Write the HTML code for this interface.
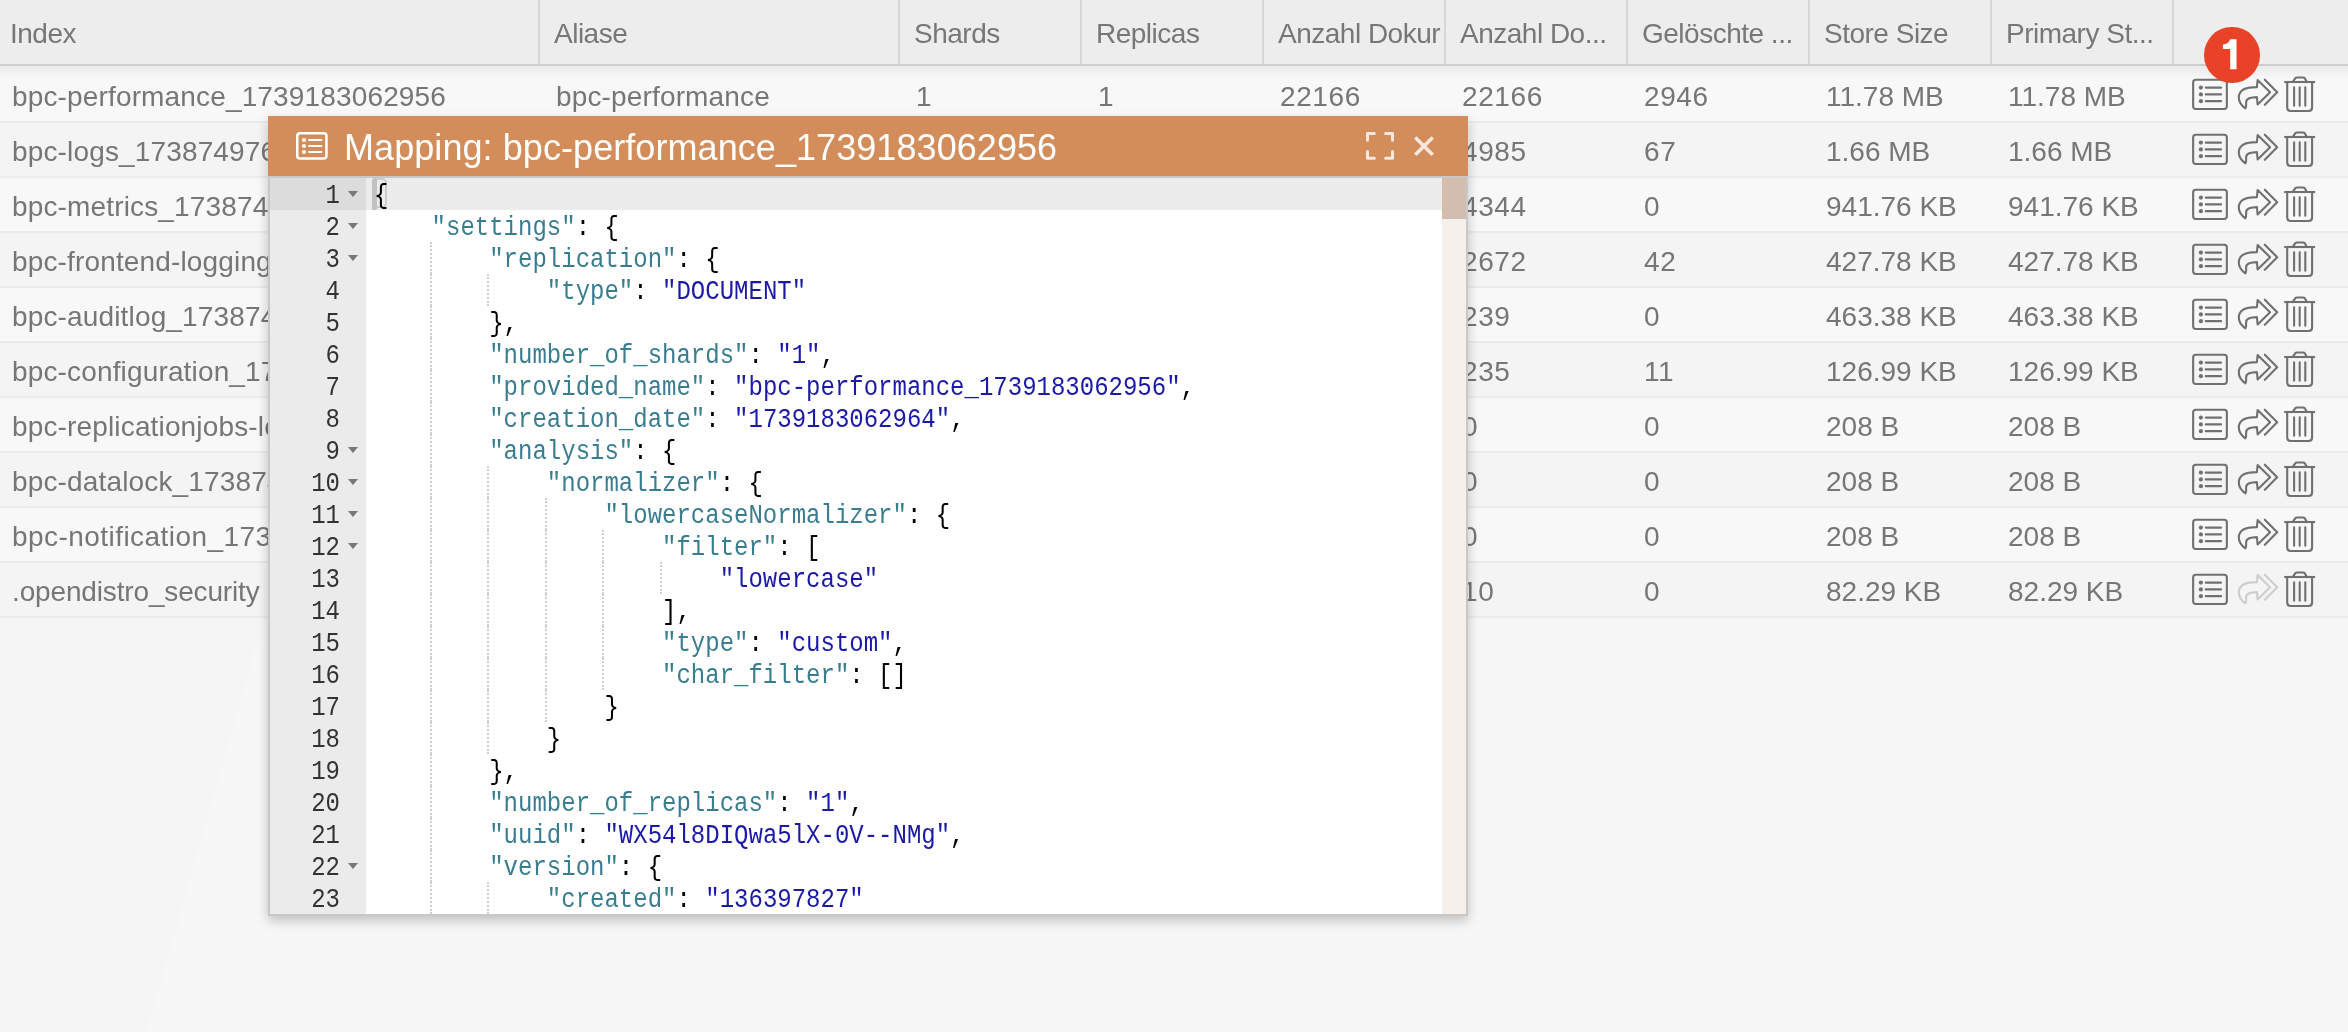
<!DOCTYPE html>
<html><head><meta charset="utf-8"><style>
#wrap{position:absolute;left:0;top:0;width:2348px;height:1032px;will-change:transform}
*{box-sizing:border-box;margin:0;padding:0}
html,body{width:2348px;height:1032px;overflow:hidden;background:#f7f7f7;font-family:"Liberation Sans",sans-serif}
.hdr{position:absolute;left:0;top:0;width:2348px;height:64px;background:#ededed;border-bottom:0}
.hline{position:absolute;left:0;top:64px;width:2348px;height:2px;background:#cdcdcd}
.hshade{position:absolute;left:0;top:66px;width:2348px;height:14px;background:linear-gradient(rgba(0,0,0,0.055),rgba(0,0,0,0))}
.div{position:absolute;top:0;height:64px;width:2px;background:#d8d8d8}
.ht{position:absolute;top:2px;height:64px;line-height:64px;font-size:28px;letter-spacing:-0.5px;color:#777777;white-space:nowrap;overflow:hidden}
.row{position:absolute;left:0;width:2348px;height:55px}
.rb{position:absolute;left:0;width:2348px;height:2px;background:#ebebeb}
.r0{background:#f8f8f8}.r1{background:#f4f4f4}
.tri{position:absolute;left:0;top:618px;width:300px;height:414px;background:#f5f5f5;clip-path:polygon(0 0,264px 0,147px 414px,0 414px)}
.ct{position:absolute;height:55px;line-height:61px;font-size:28px;color:#767676;white-space:nowrap;overflow:hidden}
.ic{position:absolute;color:#707070}
.badge{position:absolute;left:2204.2px;top:27px;width:55.5px;height:55.5px;border-radius:50%;background:#e84328;color:#fff;font-weight:bold;font-size:40px;line-height:54px;text-align:center}
.modal{position:absolute;left:268px;top:116px;width:1200px;height:800px;background:#fff;box-shadow:0 5px 11px rgba(0,0,0,.22)}
.mh{position:absolute;left:0;top:0;width:1200px;height:60px;background:#d38d5b;color:#fff}
.mt{position:absolute;left:76px;top:1.5px;letter-spacing:0.07px;height:60px;line-height:60px;font-size:36px;white-space:nowrap}
.mb{position:absolute;left:0;top:60px;width:1200px;height:740px;border:2px solid #c8c8c8;background:#fff;overflow:hidden}
.gut{position:absolute;left:0;top:0;width:96px;height:736px;background:#ebebeb}
.ln{position:absolute;left:0;width:96px;height:32px;line-height:32px;font-family:"Liberation Mono",monospace;font-size:24px;transform:scaleY(1.13);transform-origin:0 0;color:#333;text-align:right;padding-right:26px}
.fold{position:absolute;left:78px;width:0;height:0;border-left:5px solid transparent;border-right:5px solid transparent;border-top:6px solid #777}
.code{position:absolute;left:104px;top:0}
.cl{position:absolute;left:0;height:32px;line-height:32px;font-family:"Liberation Mono",monospace;font-size:24px;transform:scaleY(1.13);transform-origin:0 0;white-space:pre;color:#000}
.k{color:#3a7d90}.s{color:#1a1aa6}
.guide{position:absolute;width:0;border-left:2px dotted #d0d0d0}
.sb{position:absolute;left:1172px;top:0;width:24px;height:736px;background:#f5f0ec}
.sbt{position:absolute;left:1172px;top:0;width:24px;height:41px;background:#d2bdae}
</style></head><body><div id="wrap">

<div class="tri"></div><div class="hdr"></div><div class="hline"></div>
<div class="div" style="left:538px"></div>
<div class="div" style="left:898px"></div>
<div class="div" style="left:1080px"></div>
<div class="div" style="left:1262px"></div>
<div class="div" style="left:1444px"></div>
<div class="div" style="left:1626px"></div>
<div class="div" style="left:1808px"></div>
<div class="div" style="left:1990px"></div>
<div class="div" style="left:2172px"></div>
<div class="ht" style="left:10px;width:524px">Index</div>
<div class="ht" style="left:554px;width:344px">Aliase</div>
<div class="ht" style="left:914px;width:166px">Shards</div>
<div class="ht" style="left:1096px;width:166px">Replicas</div>
<div class="ht" style="left:1278px;width:166px">Anzahl Dokur</div>
<div class="ht" style="left:1460px;width:166px">Anzahl Do...</div>
<div class="ht" style="left:1642px;width:166px">Gelöschte ...</div>
<div class="ht" style="left:1824px;width:166px">Store Size</div>
<div class="ht" style="left:2006px;width:166px">Primary St...</div>
<div class="row r0" style="top:66px"></div>
<div class="ct" style="left:12px;top:66px;width:522px;letter-spacing:0.15px">bpc-performance_1739183062956</div>
<div class="ct" style="left:556px;top:66px;width:342px;letter-spacing:0.15px">bpc-performance</div>
<div class="ct" style="left:916px;top:66px;width:164px;letter-spacing:0.6px">1</div>
<div class="ct" style="left:1098px;top:66px;width:164px;letter-spacing:0.6px">1</div>
<div class="ct" style="left:1280px;top:66px;width:164px;letter-spacing:0.6px">22166</div>
<div class="ct" style="left:1462px;top:66px;width:164px;letter-spacing:0.6px">22166</div>
<div class="ct" style="left:1644px;top:66px;width:164px;letter-spacing:0.6px">2946</div>
<div class="ct" style="left:1826px;top:66px;width:164px;letter-spacing:0px">11.78 MB</div>
<div class="ct" style="left:2008px;top:66px;width:164px;letter-spacing:0px">11.78 MB</div>
<svg class="ic" style="left:2186px;top:72px" width="48" height="44" viewBox="0 0 48 44"><rect x="7.15" y="7.75" width="33.7" height="29.2" rx="2.6" fill="none" stroke="currentColor" stroke-width="2.1"/><circle cx="14.9" cy="15.6" r="2.1" fill="currentColor"/><circle cx="14.9" cy="22.4" r="2.1" fill="currentColor"/><circle cx="14.9" cy="29.2" r="2.1" fill="currentColor"/><path d="M19.8 15.6H35M19.8 22.4H35M19.8 29.2H35" stroke="currentColor" stroke-width="2.3" stroke-linecap="round"/></svg>
<svg class="ic" style="left:2232px;top:72px;color:#707070" width="52" height="44" viewBox="0 0 52 44"><path d="M24.9 15.1 L25.6 8.1 L38.1 20.2 L25.6 32.4 L24.9 25.1 C19 25.2 14 26.5 14.1 30.5 C14.1 33 14.6 35 13.4 36.4 C9.5 33.5 6.8 29.5 6.8 25.5 C6.8 18 13 15.1 24.9 15.1 Z" fill="none" stroke="currentColor" stroke-width="2.1" stroke-linejoin="round"/><path d="M32.8 7.7 L45.2 20.2 L32.8 32.8" fill="none" stroke="currentColor" stroke-width="2.1" stroke-linecap="round" stroke-linejoin="round"/></svg>
<svg class="ic" style="left:2278px;top:72px" width="44" height="44" viewBox="0 0 44 44"><path d="M6.2 10H37.1" stroke="currentColor" stroke-width="2.1"/><path d="M14.9 9.6 L17.2 6.3 Q17.9 5.5 19 5.5 H25 Q26.1 5.5 26.8 6.3 L28.6 9.6" fill="none" stroke="currentColor" stroke-width="2.1"/><path d="M9.2 10 V35.5 Q9.2 39 12.7 39 H30.6 Q34.1 39 34.1 35.5 V10" fill="none" stroke="currentColor" stroke-width="2.1"/><path d="M16.1 15.2V33.8M21.7 15.2V33.8M27.3 15.2V33.8" stroke="currentColor" stroke-width="2.1" stroke-linecap="round"/></svg>
<div class="row r1" style="top:121px"></div>
<div class="rb" style="top:121px"></div>
<div class="ct" style="left:12px;top:121px;width:522px;letter-spacing:0.15px">bpc-logs_1738749762123</div>
<div class="ct" style="left:556px;top:121px;width:342px;letter-spacing:0.15px">bpc-logs</div>
<div class="ct" style="left:916px;top:121px;width:164px;letter-spacing:0.6px">1</div>
<div class="ct" style="left:1098px;top:121px;width:164px;letter-spacing:0.6px">1</div>
<div class="ct" style="left:1280px;top:121px;width:164px;letter-spacing:0.6px">4985</div>
<div class="ct" style="left:1462px;top:121px;width:164px;letter-spacing:0.6px">4985</div>
<div class="ct" style="left:1644px;top:121px;width:164px;letter-spacing:0.6px">67</div>
<div class="ct" style="left:1826px;top:121px;width:164px;letter-spacing:0px">1.66 MB</div>
<div class="ct" style="left:2008px;top:121px;width:164px;letter-spacing:0px">1.66 MB</div>
<svg class="ic" style="left:2186px;top:127px" width="48" height="44" viewBox="0 0 48 44"><rect x="7.15" y="7.75" width="33.7" height="29.2" rx="2.6" fill="none" stroke="currentColor" stroke-width="2.1"/><circle cx="14.9" cy="15.6" r="2.1" fill="currentColor"/><circle cx="14.9" cy="22.4" r="2.1" fill="currentColor"/><circle cx="14.9" cy="29.2" r="2.1" fill="currentColor"/><path d="M19.8 15.6H35M19.8 22.4H35M19.8 29.2H35" stroke="currentColor" stroke-width="2.3" stroke-linecap="round"/></svg>
<svg class="ic" style="left:2232px;top:127px;color:#707070" width="52" height="44" viewBox="0 0 52 44"><path d="M24.9 15.1 L25.6 8.1 L38.1 20.2 L25.6 32.4 L24.9 25.1 C19 25.2 14 26.5 14.1 30.5 C14.1 33 14.6 35 13.4 36.4 C9.5 33.5 6.8 29.5 6.8 25.5 C6.8 18 13 15.1 24.9 15.1 Z" fill="none" stroke="currentColor" stroke-width="2.1" stroke-linejoin="round"/><path d="M32.8 7.7 L45.2 20.2 L32.8 32.8" fill="none" stroke="currentColor" stroke-width="2.1" stroke-linecap="round" stroke-linejoin="round"/></svg>
<svg class="ic" style="left:2278px;top:127px" width="44" height="44" viewBox="0 0 44 44"><path d="M6.2 10H37.1" stroke="currentColor" stroke-width="2.1"/><path d="M14.9 9.6 L17.2 6.3 Q17.9 5.5 19 5.5 H25 Q26.1 5.5 26.8 6.3 L28.6 9.6" fill="none" stroke="currentColor" stroke-width="2.1"/><path d="M9.2 10 V35.5 Q9.2 39 12.7 39 H30.6 Q34.1 39 34.1 35.5 V10" fill="none" stroke="currentColor" stroke-width="2.1"/><path d="M16.1 15.2V33.8M21.7 15.2V33.8M27.3 15.2V33.8" stroke="currentColor" stroke-width="2.1" stroke-linecap="round"/></svg>
<div class="row r0" style="top:176px"></div>
<div class="rb" style="top:176px"></div>
<div class="ct" style="left:12px;top:176px;width:522px;letter-spacing:0.15px">bpc-metrics_1738749762456</div>
<div class="ct" style="left:556px;top:176px;width:342px;letter-spacing:0.15px">bpc-metrics</div>
<div class="ct" style="left:916px;top:176px;width:164px;letter-spacing:0.6px">1</div>
<div class="ct" style="left:1098px;top:176px;width:164px;letter-spacing:0.6px">1</div>
<div class="ct" style="left:1280px;top:176px;width:164px;letter-spacing:0.6px">4344</div>
<div class="ct" style="left:1462px;top:176px;width:164px;letter-spacing:0.6px">4344</div>
<div class="ct" style="left:1644px;top:176px;width:164px;letter-spacing:0.6px">0</div>
<div class="ct" style="left:1826px;top:176px;width:164px;letter-spacing:0px">941.76 KB</div>
<div class="ct" style="left:2008px;top:176px;width:164px;letter-spacing:0px">941.76 KB</div>
<svg class="ic" style="left:2186px;top:182px" width="48" height="44" viewBox="0 0 48 44"><rect x="7.15" y="7.75" width="33.7" height="29.2" rx="2.6" fill="none" stroke="currentColor" stroke-width="2.1"/><circle cx="14.9" cy="15.6" r="2.1" fill="currentColor"/><circle cx="14.9" cy="22.4" r="2.1" fill="currentColor"/><circle cx="14.9" cy="29.2" r="2.1" fill="currentColor"/><path d="M19.8 15.6H35M19.8 22.4H35M19.8 29.2H35" stroke="currentColor" stroke-width="2.3" stroke-linecap="round"/></svg>
<svg class="ic" style="left:2232px;top:182px;color:#707070" width="52" height="44" viewBox="0 0 52 44"><path d="M24.9 15.1 L25.6 8.1 L38.1 20.2 L25.6 32.4 L24.9 25.1 C19 25.2 14 26.5 14.1 30.5 C14.1 33 14.6 35 13.4 36.4 C9.5 33.5 6.8 29.5 6.8 25.5 C6.8 18 13 15.1 24.9 15.1 Z" fill="none" stroke="currentColor" stroke-width="2.1" stroke-linejoin="round"/><path d="M32.8 7.7 L45.2 20.2 L32.8 32.8" fill="none" stroke="currentColor" stroke-width="2.1" stroke-linecap="round" stroke-linejoin="round"/></svg>
<svg class="ic" style="left:2278px;top:182px" width="44" height="44" viewBox="0 0 44 44"><path d="M6.2 10H37.1" stroke="currentColor" stroke-width="2.1"/><path d="M14.9 9.6 L17.2 6.3 Q17.9 5.5 19 5.5 H25 Q26.1 5.5 26.8 6.3 L28.6 9.6" fill="none" stroke="currentColor" stroke-width="2.1"/><path d="M9.2 10 V35.5 Q9.2 39 12.7 39 H30.6 Q34.1 39 34.1 35.5 V10" fill="none" stroke="currentColor" stroke-width="2.1"/><path d="M16.1 15.2V33.8M21.7 15.2V33.8M27.3 15.2V33.8" stroke="currentColor" stroke-width="2.1" stroke-linecap="round"/></svg>
<div class="row r1" style="top:231px"></div>
<div class="rb" style="top:231px"></div>
<div class="ct" style="left:12px;top:231px;width:522px;letter-spacing:0.15px">bpc-frontend-logging_1738749762</div>
<div class="ct" style="left:556px;top:231px;width:342px;letter-spacing:0.15px">bpc-frontend-logging</div>
<div class="ct" style="left:916px;top:231px;width:164px;letter-spacing:0.6px">1</div>
<div class="ct" style="left:1098px;top:231px;width:164px;letter-spacing:0.6px">1</div>
<div class="ct" style="left:1280px;top:231px;width:164px;letter-spacing:0.6px">2672</div>
<div class="ct" style="left:1462px;top:231px;width:164px;letter-spacing:0.6px">2672</div>
<div class="ct" style="left:1644px;top:231px;width:164px;letter-spacing:0.6px">42</div>
<div class="ct" style="left:1826px;top:231px;width:164px;letter-spacing:0px">427.78 KB</div>
<div class="ct" style="left:2008px;top:231px;width:164px;letter-spacing:0px">427.78 KB</div>
<svg class="ic" style="left:2186px;top:237px" width="48" height="44" viewBox="0 0 48 44"><rect x="7.15" y="7.75" width="33.7" height="29.2" rx="2.6" fill="none" stroke="currentColor" stroke-width="2.1"/><circle cx="14.9" cy="15.6" r="2.1" fill="currentColor"/><circle cx="14.9" cy="22.4" r="2.1" fill="currentColor"/><circle cx="14.9" cy="29.2" r="2.1" fill="currentColor"/><path d="M19.8 15.6H35M19.8 22.4H35M19.8 29.2H35" stroke="currentColor" stroke-width="2.3" stroke-linecap="round"/></svg>
<svg class="ic" style="left:2232px;top:237px;color:#707070" width="52" height="44" viewBox="0 0 52 44"><path d="M24.9 15.1 L25.6 8.1 L38.1 20.2 L25.6 32.4 L24.9 25.1 C19 25.2 14 26.5 14.1 30.5 C14.1 33 14.6 35 13.4 36.4 C9.5 33.5 6.8 29.5 6.8 25.5 C6.8 18 13 15.1 24.9 15.1 Z" fill="none" stroke="currentColor" stroke-width="2.1" stroke-linejoin="round"/><path d="M32.8 7.7 L45.2 20.2 L32.8 32.8" fill="none" stroke="currentColor" stroke-width="2.1" stroke-linecap="round" stroke-linejoin="round"/></svg>
<svg class="ic" style="left:2278px;top:237px" width="44" height="44" viewBox="0 0 44 44"><path d="M6.2 10H37.1" stroke="currentColor" stroke-width="2.1"/><path d="M14.9 9.6 L17.2 6.3 Q17.9 5.5 19 5.5 H25 Q26.1 5.5 26.8 6.3 L28.6 9.6" fill="none" stroke="currentColor" stroke-width="2.1"/><path d="M9.2 10 V35.5 Q9.2 39 12.7 39 H30.6 Q34.1 39 34.1 35.5 V10" fill="none" stroke="currentColor" stroke-width="2.1"/><path d="M16.1 15.2V33.8M21.7 15.2V33.8M27.3 15.2V33.8" stroke="currentColor" stroke-width="2.1" stroke-linecap="round"/></svg>
<div class="row r0" style="top:286px"></div>
<div class="rb" style="top:286px"></div>
<div class="ct" style="left:12px;top:286px;width:522px;letter-spacing:0.15px">bpc-auditlog_1738749762789</div>
<div class="ct" style="left:556px;top:286px;width:342px;letter-spacing:0.15px">bpc-auditlog</div>
<div class="ct" style="left:916px;top:286px;width:164px;letter-spacing:0.6px">1</div>
<div class="ct" style="left:1098px;top:286px;width:164px;letter-spacing:0.6px">1</div>
<div class="ct" style="left:1280px;top:286px;width:164px;letter-spacing:0.6px">239</div>
<div class="ct" style="left:1462px;top:286px;width:164px;letter-spacing:0.6px">239</div>
<div class="ct" style="left:1644px;top:286px;width:164px;letter-spacing:0.6px">0</div>
<div class="ct" style="left:1826px;top:286px;width:164px;letter-spacing:0px">463.38 KB</div>
<div class="ct" style="left:2008px;top:286px;width:164px;letter-spacing:0px">463.38 KB</div>
<svg class="ic" style="left:2186px;top:292px" width="48" height="44" viewBox="0 0 48 44"><rect x="7.15" y="7.75" width="33.7" height="29.2" rx="2.6" fill="none" stroke="currentColor" stroke-width="2.1"/><circle cx="14.9" cy="15.6" r="2.1" fill="currentColor"/><circle cx="14.9" cy="22.4" r="2.1" fill="currentColor"/><circle cx="14.9" cy="29.2" r="2.1" fill="currentColor"/><path d="M19.8 15.6H35M19.8 22.4H35M19.8 29.2H35" stroke="currentColor" stroke-width="2.3" stroke-linecap="round"/></svg>
<svg class="ic" style="left:2232px;top:292px;color:#707070" width="52" height="44" viewBox="0 0 52 44"><path d="M24.9 15.1 L25.6 8.1 L38.1 20.2 L25.6 32.4 L24.9 25.1 C19 25.2 14 26.5 14.1 30.5 C14.1 33 14.6 35 13.4 36.4 C9.5 33.5 6.8 29.5 6.8 25.5 C6.8 18 13 15.1 24.9 15.1 Z" fill="none" stroke="currentColor" stroke-width="2.1" stroke-linejoin="round"/><path d="M32.8 7.7 L45.2 20.2 L32.8 32.8" fill="none" stroke="currentColor" stroke-width="2.1" stroke-linecap="round" stroke-linejoin="round"/></svg>
<svg class="ic" style="left:2278px;top:292px" width="44" height="44" viewBox="0 0 44 44"><path d="M6.2 10H37.1" stroke="currentColor" stroke-width="2.1"/><path d="M14.9 9.6 L17.2 6.3 Q17.9 5.5 19 5.5 H25 Q26.1 5.5 26.8 6.3 L28.6 9.6" fill="none" stroke="currentColor" stroke-width="2.1"/><path d="M9.2 10 V35.5 Q9.2 39 12.7 39 H30.6 Q34.1 39 34.1 35.5 V10" fill="none" stroke="currentColor" stroke-width="2.1"/><path d="M16.1 15.2V33.8M21.7 15.2V33.8M27.3 15.2V33.8" stroke="currentColor" stroke-width="2.1" stroke-linecap="round"/></svg>
<div class="row r1" style="top:341px"></div>
<div class="rb" style="top:341px"></div>
<div class="ct" style="left:12px;top:341px;width:522px;letter-spacing:0.15px">bpc-configuration_1738749762</div>
<div class="ct" style="left:556px;top:341px;width:342px;letter-spacing:0.15px">bpc-configuration</div>
<div class="ct" style="left:916px;top:341px;width:164px;letter-spacing:0.6px">1</div>
<div class="ct" style="left:1098px;top:341px;width:164px;letter-spacing:0.6px">1</div>
<div class="ct" style="left:1280px;top:341px;width:164px;letter-spacing:0.6px">235</div>
<div class="ct" style="left:1462px;top:341px;width:164px;letter-spacing:0.6px">235</div>
<div class="ct" style="left:1644px;top:341px;width:164px;letter-spacing:0.6px">11</div>
<div class="ct" style="left:1826px;top:341px;width:164px;letter-spacing:0px">126.99 KB</div>
<div class="ct" style="left:2008px;top:341px;width:164px;letter-spacing:0px">126.99 KB</div>
<svg class="ic" style="left:2186px;top:347px" width="48" height="44" viewBox="0 0 48 44"><rect x="7.15" y="7.75" width="33.7" height="29.2" rx="2.6" fill="none" stroke="currentColor" stroke-width="2.1"/><circle cx="14.9" cy="15.6" r="2.1" fill="currentColor"/><circle cx="14.9" cy="22.4" r="2.1" fill="currentColor"/><circle cx="14.9" cy="29.2" r="2.1" fill="currentColor"/><path d="M19.8 15.6H35M19.8 22.4H35M19.8 29.2H35" stroke="currentColor" stroke-width="2.3" stroke-linecap="round"/></svg>
<svg class="ic" style="left:2232px;top:347px;color:#707070" width="52" height="44" viewBox="0 0 52 44"><path d="M24.9 15.1 L25.6 8.1 L38.1 20.2 L25.6 32.4 L24.9 25.1 C19 25.2 14 26.5 14.1 30.5 C14.1 33 14.6 35 13.4 36.4 C9.5 33.5 6.8 29.5 6.8 25.5 C6.8 18 13 15.1 24.9 15.1 Z" fill="none" stroke="currentColor" stroke-width="2.1" stroke-linejoin="round"/><path d="M32.8 7.7 L45.2 20.2 L32.8 32.8" fill="none" stroke="currentColor" stroke-width="2.1" stroke-linecap="round" stroke-linejoin="round"/></svg>
<svg class="ic" style="left:2278px;top:347px" width="44" height="44" viewBox="0 0 44 44"><path d="M6.2 10H37.1" stroke="currentColor" stroke-width="2.1"/><path d="M14.9 9.6 L17.2 6.3 Q17.9 5.5 19 5.5 H25 Q26.1 5.5 26.8 6.3 L28.6 9.6" fill="none" stroke="currentColor" stroke-width="2.1"/><path d="M9.2 10 V35.5 Q9.2 39 12.7 39 H30.6 Q34.1 39 34.1 35.5 V10" fill="none" stroke="currentColor" stroke-width="2.1"/><path d="M16.1 15.2V33.8M21.7 15.2V33.8M27.3 15.2V33.8" stroke="currentColor" stroke-width="2.1" stroke-linecap="round"/></svg>
<div class="row r0" style="top:396px"></div>
<div class="rb" style="top:396px"></div>
<div class="ct" style="left:12px;top:396px;width:522px;letter-spacing:0.15px">bpc-replicationjobs-logs_173</div>
<div class="ct" style="left:556px;top:396px;width:342px;letter-spacing:0.15px">bpc-replicationjobs</div>
<div class="ct" style="left:916px;top:396px;width:164px;letter-spacing:0.6px">1</div>
<div class="ct" style="left:1098px;top:396px;width:164px;letter-spacing:0.6px">1</div>
<div class="ct" style="left:1280px;top:396px;width:164px;letter-spacing:0.6px">0</div>
<div class="ct" style="left:1462px;top:396px;width:164px;letter-spacing:0.6px">0</div>
<div class="ct" style="left:1644px;top:396px;width:164px;letter-spacing:0.6px">0</div>
<div class="ct" style="left:1826px;top:396px;width:164px;letter-spacing:0px">208 B</div>
<div class="ct" style="left:2008px;top:396px;width:164px;letter-spacing:0px">208 B</div>
<svg class="ic" style="left:2186px;top:402px" width="48" height="44" viewBox="0 0 48 44"><rect x="7.15" y="7.75" width="33.7" height="29.2" rx="2.6" fill="none" stroke="currentColor" stroke-width="2.1"/><circle cx="14.9" cy="15.6" r="2.1" fill="currentColor"/><circle cx="14.9" cy="22.4" r="2.1" fill="currentColor"/><circle cx="14.9" cy="29.2" r="2.1" fill="currentColor"/><path d="M19.8 15.6H35M19.8 22.4H35M19.8 29.2H35" stroke="currentColor" stroke-width="2.3" stroke-linecap="round"/></svg>
<svg class="ic" style="left:2232px;top:402px;color:#707070" width="52" height="44" viewBox="0 0 52 44"><path d="M24.9 15.1 L25.6 8.1 L38.1 20.2 L25.6 32.4 L24.9 25.1 C19 25.2 14 26.5 14.1 30.5 C14.1 33 14.6 35 13.4 36.4 C9.5 33.5 6.8 29.5 6.8 25.5 C6.8 18 13 15.1 24.9 15.1 Z" fill="none" stroke="currentColor" stroke-width="2.1" stroke-linejoin="round"/><path d="M32.8 7.7 L45.2 20.2 L32.8 32.8" fill="none" stroke="currentColor" stroke-width="2.1" stroke-linecap="round" stroke-linejoin="round"/></svg>
<svg class="ic" style="left:2278px;top:402px" width="44" height="44" viewBox="0 0 44 44"><path d="M6.2 10H37.1" stroke="currentColor" stroke-width="2.1"/><path d="M14.9 9.6 L17.2 6.3 Q17.9 5.5 19 5.5 H25 Q26.1 5.5 26.8 6.3 L28.6 9.6" fill="none" stroke="currentColor" stroke-width="2.1"/><path d="M9.2 10 V35.5 Q9.2 39 12.7 39 H30.6 Q34.1 39 34.1 35.5 V10" fill="none" stroke="currentColor" stroke-width="2.1"/><path d="M16.1 15.2V33.8M21.7 15.2V33.8M27.3 15.2V33.8" stroke="currentColor" stroke-width="2.1" stroke-linecap="round"/></svg>
<div class="row r1" style="top:451px"></div>
<div class="rb" style="top:451px"></div>
<div class="ct" style="left:12px;top:451px;width:522px;letter-spacing:0.15px">bpc-datalock_1738749762321</div>
<div class="ct" style="left:556px;top:451px;width:342px;letter-spacing:0.15px">bpc-datalock</div>
<div class="ct" style="left:916px;top:451px;width:164px;letter-spacing:0.6px">1</div>
<div class="ct" style="left:1098px;top:451px;width:164px;letter-spacing:0.6px">1</div>
<div class="ct" style="left:1280px;top:451px;width:164px;letter-spacing:0.6px">0</div>
<div class="ct" style="left:1462px;top:451px;width:164px;letter-spacing:0.6px">0</div>
<div class="ct" style="left:1644px;top:451px;width:164px;letter-spacing:0.6px">0</div>
<div class="ct" style="left:1826px;top:451px;width:164px;letter-spacing:0px">208 B</div>
<div class="ct" style="left:2008px;top:451px;width:164px;letter-spacing:0px">208 B</div>
<svg class="ic" style="left:2186px;top:457px" width="48" height="44" viewBox="0 0 48 44"><rect x="7.15" y="7.75" width="33.7" height="29.2" rx="2.6" fill="none" stroke="currentColor" stroke-width="2.1"/><circle cx="14.9" cy="15.6" r="2.1" fill="currentColor"/><circle cx="14.9" cy="22.4" r="2.1" fill="currentColor"/><circle cx="14.9" cy="29.2" r="2.1" fill="currentColor"/><path d="M19.8 15.6H35M19.8 22.4H35M19.8 29.2H35" stroke="currentColor" stroke-width="2.3" stroke-linecap="round"/></svg>
<svg class="ic" style="left:2232px;top:457px;color:#707070" width="52" height="44" viewBox="0 0 52 44"><path d="M24.9 15.1 L25.6 8.1 L38.1 20.2 L25.6 32.4 L24.9 25.1 C19 25.2 14 26.5 14.1 30.5 C14.1 33 14.6 35 13.4 36.4 C9.5 33.5 6.8 29.5 6.8 25.5 C6.8 18 13 15.1 24.9 15.1 Z" fill="none" stroke="currentColor" stroke-width="2.1" stroke-linejoin="round"/><path d="M32.8 7.7 L45.2 20.2 L32.8 32.8" fill="none" stroke="currentColor" stroke-width="2.1" stroke-linecap="round" stroke-linejoin="round"/></svg>
<svg class="ic" style="left:2278px;top:457px" width="44" height="44" viewBox="0 0 44 44"><path d="M6.2 10H37.1" stroke="currentColor" stroke-width="2.1"/><path d="M14.9 9.6 L17.2 6.3 Q17.9 5.5 19 5.5 H25 Q26.1 5.5 26.8 6.3 L28.6 9.6" fill="none" stroke="currentColor" stroke-width="2.1"/><path d="M9.2 10 V35.5 Q9.2 39 12.7 39 H30.6 Q34.1 39 34.1 35.5 V10" fill="none" stroke="currentColor" stroke-width="2.1"/><path d="M16.1 15.2V33.8M21.7 15.2V33.8M27.3 15.2V33.8" stroke="currentColor" stroke-width="2.1" stroke-linecap="round"/></svg>
<div class="row r0" style="top:506px"></div>
<div class="rb" style="top:506px"></div>
<div class="ct" style="left:12px;top:506px;width:522px;letter-spacing:0.45px">bpc-notification_1738749762</div>
<div class="ct" style="left:556px;top:506px;width:342px;letter-spacing:0.15px">bpc-notification</div>
<div class="ct" style="left:916px;top:506px;width:164px;letter-spacing:0.6px">1</div>
<div class="ct" style="left:1098px;top:506px;width:164px;letter-spacing:0.6px">1</div>
<div class="ct" style="left:1280px;top:506px;width:164px;letter-spacing:0.6px">0</div>
<div class="ct" style="left:1462px;top:506px;width:164px;letter-spacing:0.6px">0</div>
<div class="ct" style="left:1644px;top:506px;width:164px;letter-spacing:0.6px">0</div>
<div class="ct" style="left:1826px;top:506px;width:164px;letter-spacing:0px">208 B</div>
<div class="ct" style="left:2008px;top:506px;width:164px;letter-spacing:0px">208 B</div>
<svg class="ic" style="left:2186px;top:512px" width="48" height="44" viewBox="0 0 48 44"><rect x="7.15" y="7.75" width="33.7" height="29.2" rx="2.6" fill="none" stroke="currentColor" stroke-width="2.1"/><circle cx="14.9" cy="15.6" r="2.1" fill="currentColor"/><circle cx="14.9" cy="22.4" r="2.1" fill="currentColor"/><circle cx="14.9" cy="29.2" r="2.1" fill="currentColor"/><path d="M19.8 15.6H35M19.8 22.4H35M19.8 29.2H35" stroke="currentColor" stroke-width="2.3" stroke-linecap="round"/></svg>
<svg class="ic" style="left:2232px;top:512px;color:#707070" width="52" height="44" viewBox="0 0 52 44"><path d="M24.9 15.1 L25.6 8.1 L38.1 20.2 L25.6 32.4 L24.9 25.1 C19 25.2 14 26.5 14.1 30.5 C14.1 33 14.6 35 13.4 36.4 C9.5 33.5 6.8 29.5 6.8 25.5 C6.8 18 13 15.1 24.9 15.1 Z" fill="none" stroke="currentColor" stroke-width="2.1" stroke-linejoin="round"/><path d="M32.8 7.7 L45.2 20.2 L32.8 32.8" fill="none" stroke="currentColor" stroke-width="2.1" stroke-linecap="round" stroke-linejoin="round"/></svg>
<svg class="ic" style="left:2278px;top:512px" width="44" height="44" viewBox="0 0 44 44"><path d="M6.2 10H37.1" stroke="currentColor" stroke-width="2.1"/><path d="M14.9 9.6 L17.2 6.3 Q17.9 5.5 19 5.5 H25 Q26.1 5.5 26.8 6.3 L28.6 9.6" fill="none" stroke="currentColor" stroke-width="2.1"/><path d="M9.2 10 V35.5 Q9.2 39 12.7 39 H30.6 Q34.1 39 34.1 35.5 V10" fill="none" stroke="currentColor" stroke-width="2.1"/><path d="M16.1 15.2V33.8M21.7 15.2V33.8M27.3 15.2V33.8" stroke="currentColor" stroke-width="2.1" stroke-linecap="round"/></svg>
<div class="row r1" style="top:561px"></div>
<div class="rb" style="top:561px"></div>
<div class="rb" style="top:616px"></div>
<div class="ct" style="left:12px;top:561px;width:522px;letter-spacing:-0.15px">.opendistro_security</div>
<div class="ct" style="left:556px;top:561px;width:342px;letter-spacing:0.15px"></div>
<div class="ct" style="left:916px;top:561px;width:164px;letter-spacing:0.6px">1</div>
<div class="ct" style="left:1098px;top:561px;width:164px;letter-spacing:0.6px">1</div>
<div class="ct" style="left:1280px;top:561px;width:164px;letter-spacing:0.6px">10</div>
<div class="ct" style="left:1462px;top:561px;width:164px;letter-spacing:0.6px">10</div>
<div class="ct" style="left:1644px;top:561px;width:164px;letter-spacing:0.6px">0</div>
<div class="ct" style="left:1826px;top:561px;width:164px;letter-spacing:0px">82.29 KB</div>
<div class="ct" style="left:2008px;top:561px;width:164px;letter-spacing:0px">82.29 KB</div>
<svg class="ic" style="left:2186px;top:567px" width="48" height="44" viewBox="0 0 48 44"><rect x="7.15" y="7.75" width="33.7" height="29.2" rx="2.6" fill="none" stroke="currentColor" stroke-width="2.1"/><circle cx="14.9" cy="15.6" r="2.1" fill="currentColor"/><circle cx="14.9" cy="22.4" r="2.1" fill="currentColor"/><circle cx="14.9" cy="29.2" r="2.1" fill="currentColor"/><path d="M19.8 15.6H35M19.8 22.4H35M19.8 29.2H35" stroke="currentColor" stroke-width="2.3" stroke-linecap="round"/></svg>
<svg class="ic" style="left:2232px;top:567px;color:#cdcdcd" width="52" height="44" viewBox="0 0 52 44"><path d="M24.9 15.1 L25.6 8.1 L38.1 20.2 L25.6 32.4 L24.9 25.1 C19 25.2 14 26.5 14.1 30.5 C14.1 33 14.6 35 13.4 36.4 C9.5 33.5 6.8 29.5 6.8 25.5 C6.8 18 13 15.1 24.9 15.1 Z" fill="none" stroke="currentColor" stroke-width="2.1" stroke-linejoin="round"/><path d="M32.8 7.7 L45.2 20.2 L32.8 32.8" fill="none" stroke="currentColor" stroke-width="2.1" stroke-linecap="round" stroke-linejoin="round"/></svg>
<svg class="ic" style="left:2278px;top:567px" width="44" height="44" viewBox="0 0 44 44"><path d="M6.2 10H37.1" stroke="currentColor" stroke-width="2.1"/><path d="M14.9 9.6 L17.2 6.3 Q17.9 5.5 19 5.5 H25 Q26.1 5.5 26.8 6.3 L28.6 9.6" fill="none" stroke="currentColor" stroke-width="2.1"/><path d="M9.2 10 V35.5 Q9.2 39 12.7 39 H30.6 Q34.1 39 34.1 35.5 V10" fill="none" stroke="currentColor" stroke-width="2.1"/><path d="M16.1 15.2V33.8M21.7 15.2V33.8M27.3 15.2V33.8" stroke="currentColor" stroke-width="2.1" stroke-linecap="round"/></svg>
<div class="hshade"></div><div class="badge"></div><svg style="position:absolute;left:2210px;top:30px" width="40" height="50" viewBox="2210 30 40 50"><path d="M2230.2 39.2 H2236.5 V69.2 H2230.2 V49 H2222.9 V44.4 Q2228.6 44.2 2230.2 39.2 Z" fill="#fff"/></svg>
<div class="modal"><div class="mh">
<svg style="position:absolute;left:28px;top:16px" width="34" height="30" viewBox="0 0 34 30"><rect x="1.25" y="1.25" width="29.2" height="25.3" rx="2.8" fill="none" stroke="#fff" stroke-width="2.5"/><circle cx="8" cy="8" r="2.05" fill="#fff"/><circle cx="8" cy="14" r="2.05" fill="#fff"/><circle cx="8" cy="20" r="2.05" fill="#fff"/><path d="M12.3 8H26.2M12.3 14H26.2M12.3 20H26.2" stroke="#fff" stroke-width="1.9"/></svg>
<div class="mt">Mapping: bpc-performance_1739183062956</div>
<svg style="position:absolute;left:1088px;top:8px" width="90" height="46" viewBox="0 0 90 46"><path d="M11.5 16.3V9.6H18.3M29.6 9.6H36.5V16.3M36.5 27.6V34.3H29.6M18.3 34.3H11.5V27.6" fill="none" stroke="#f6e8de" stroke-width="3" stroke-linecap="round" stroke-linejoin="round"/><path d="M59.3 13.4L76.7 30.8M76.7 13.4L59.3 30.8" stroke="#f6e8de" stroke-width="3.6"/></svg>
</div><div class="mb">
<div class="gut"></div>
<div style="position:absolute;left:0;top:0;width:96px;height:32px;background:#dcdcdc"></div>
<div style="position:absolute;left:96px;top:0;width:1076px;height:32px;background:#ececec"></div>
<div style="position:absolute;left:102px;top:0;width:15px;height:30px;border:2px solid #cdcdcd;border-radius:5px"></div><div style="position:absolute;left:102px;top:0;width:5px;height:32px;background:#c2c2c2;border-radius:3px 3px 0 0"></div>
<div class="ln" style="top:0px">1</div>
<div class="fold" style="top:13px"></div>
<div class="cl" style="left:104px;top:0px">{</div>
<div class="ln" style="top:32px">2</div>
<div class="fold" style="top:45px"></div>
<div class="cl" style="left:104px;top:32px">    <span class="k">"settings"</span>: {</div>
<div class="ln" style="top:64px">3</div>
<div class="fold" style="top:77px"></div>
<div class="guide" style="left:160px;top:64px;height:32px"></div>
<div class="cl" style="left:104px;top:64px">        <span class="k">"replication"</span>: {</div>
<div class="ln" style="top:96px">4</div>
<div class="guide" style="left:160px;top:96px;height:32px"></div>
<div class="guide" style="left:217px;top:96px;height:32px"></div>
<div class="cl" style="left:104px;top:96px">            <span class="k">"type"</span>: <span class="s">"DOCUMENT"</span></div>
<div class="ln" style="top:128px">5</div>
<div class="guide" style="left:160px;top:128px;height:32px"></div>
<div class="cl" style="left:104px;top:128px">        },</div>
<div class="ln" style="top:160px">6</div>
<div class="guide" style="left:160px;top:160px;height:32px"></div>
<div class="cl" style="left:104px;top:160px">        <span class="k">"number_of_shards"</span>: <span class="s">"1"</span>,</div>
<div class="ln" style="top:192px">7</div>
<div class="guide" style="left:160px;top:192px;height:32px"></div>
<div class="cl" style="left:104px;top:192px">        <span class="k">"provided_name"</span>: <span class="s">"bpc-performance_1739183062956"</span>,</div>
<div class="ln" style="top:224px">8</div>
<div class="guide" style="left:160px;top:224px;height:32px"></div>
<div class="cl" style="left:104px;top:224px">        <span class="k">"creation_date"</span>: <span class="s">"1739183062964"</span>,</div>
<div class="ln" style="top:256px">9</div>
<div class="fold" style="top:269px"></div>
<div class="guide" style="left:160px;top:256px;height:32px"></div>
<div class="cl" style="left:104px;top:256px">        <span class="k">"analysis"</span>: {</div>
<div class="ln" style="top:288px">10</div>
<div class="fold" style="top:301px"></div>
<div class="guide" style="left:160px;top:288px;height:32px"></div>
<div class="guide" style="left:217px;top:288px;height:32px"></div>
<div class="cl" style="left:104px;top:288px">            <span class="k">"normalizer"</span>: {</div>
<div class="ln" style="top:320px">11</div>
<div class="fold" style="top:333px"></div>
<div class="guide" style="left:160px;top:320px;height:32px"></div>
<div class="guide" style="left:217px;top:320px;height:32px"></div>
<div class="guide" style="left:275px;top:320px;height:32px"></div>
<div class="cl" style="left:104px;top:320px">                <span class="k">"lowercaseNormalizer"</span>: {</div>
<div class="ln" style="top:352px">12</div>
<div class="fold" style="top:365px"></div>
<div class="guide" style="left:160px;top:352px;height:32px"></div>
<div class="guide" style="left:217px;top:352px;height:32px"></div>
<div class="guide" style="left:275px;top:352px;height:32px"></div>
<div class="guide" style="left:332px;top:352px;height:32px"></div>
<div class="cl" style="left:104px;top:352px">                    <span class="k">"filter"</span>: [</div>
<div class="ln" style="top:384px">13</div>
<div class="guide" style="left:160px;top:384px;height:32px"></div>
<div class="guide" style="left:217px;top:384px;height:32px"></div>
<div class="guide" style="left:275px;top:384px;height:32px"></div>
<div class="guide" style="left:332px;top:384px;height:32px"></div>
<div class="guide" style="left:390px;top:384px;height:32px"></div>
<div class="cl" style="left:104px;top:384px">                        <span class="s">"lowercase"</span></div>
<div class="ln" style="top:416px">14</div>
<div class="guide" style="left:160px;top:416px;height:32px"></div>
<div class="guide" style="left:217px;top:416px;height:32px"></div>
<div class="guide" style="left:275px;top:416px;height:32px"></div>
<div class="guide" style="left:332px;top:416px;height:32px"></div>
<div class="cl" style="left:104px;top:416px">                    ],</div>
<div class="ln" style="top:448px">15</div>
<div class="guide" style="left:160px;top:448px;height:32px"></div>
<div class="guide" style="left:217px;top:448px;height:32px"></div>
<div class="guide" style="left:275px;top:448px;height:32px"></div>
<div class="guide" style="left:332px;top:448px;height:32px"></div>
<div class="cl" style="left:104px;top:448px">                    <span class="k">"type"</span>: <span class="s">"custom"</span>,</div>
<div class="ln" style="top:480px">16</div>
<div class="guide" style="left:160px;top:480px;height:32px"></div>
<div class="guide" style="left:217px;top:480px;height:32px"></div>
<div class="guide" style="left:275px;top:480px;height:32px"></div>
<div class="guide" style="left:332px;top:480px;height:32px"></div>
<div class="cl" style="left:104px;top:480px">                    <span class="k">"char_filter"</span>: []</div>
<div class="ln" style="top:512px">17</div>
<div class="guide" style="left:160px;top:512px;height:32px"></div>
<div class="guide" style="left:217px;top:512px;height:32px"></div>
<div class="guide" style="left:275px;top:512px;height:32px"></div>
<div class="cl" style="left:104px;top:512px">                }</div>
<div class="ln" style="top:544px">18</div>
<div class="guide" style="left:160px;top:544px;height:32px"></div>
<div class="guide" style="left:217px;top:544px;height:32px"></div>
<div class="cl" style="left:104px;top:544px">            }</div>
<div class="ln" style="top:576px">19</div>
<div class="guide" style="left:160px;top:576px;height:32px"></div>
<div class="cl" style="left:104px;top:576px">        },</div>
<div class="ln" style="top:608px">20</div>
<div class="guide" style="left:160px;top:608px;height:32px"></div>
<div class="cl" style="left:104px;top:608px">        <span class="k">"number_of_replicas"</span>: <span class="s">"1"</span>,</div>
<div class="ln" style="top:640px">21</div>
<div class="guide" style="left:160px;top:640px;height:32px"></div>
<div class="cl" style="left:104px;top:640px">        <span class="k">"uuid"</span>: <span class="s">"WX54l8DIQwa5lX-0V--NMg"</span>,</div>
<div class="ln" style="top:672px">22</div>
<div class="fold" style="top:685px"></div>
<div class="guide" style="left:160px;top:672px;height:32px"></div>
<div class="cl" style="left:104px;top:672px">        <span class="k">"version"</span>: {</div>
<div class="ln" style="top:704px">23</div>
<div class="guide" style="left:160px;top:704px;height:32px"></div>
<div class="guide" style="left:217px;top:704px;height:32px"></div>
<div class="cl" style="left:104px;top:704px">            <span class="k">"created"</span>: <span class="s">"136397827"</span></div>
<div class="sb"></div><div class="sbt"></div>
</div></div>
</div></body></html>
